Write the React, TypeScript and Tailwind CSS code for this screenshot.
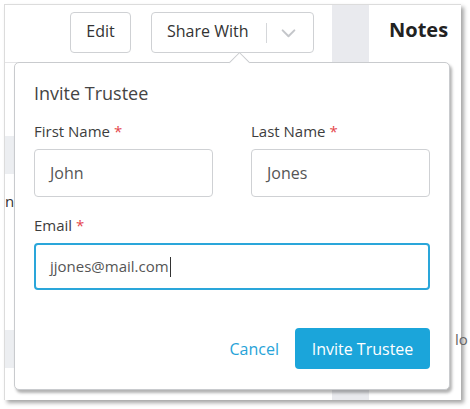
import { ReactNode } from 'react'

function Chevron() {
  return (
    <svg viewBox="0 0 16 10" fill="none" aria-hidden="true" className="h-[9px] w-[15px]">
      <path d="M1.5 1.5L8 8l6.5-6.5" stroke="#c4c6ca" strokeWidth="2.2" strokeLinecap="round" strokeLinejoin="round" />
    </svg>
  )
}

function Label({ children }: { children: ReactNode }) {
  return (
    <label className="mb-[8px] block text-[15px] leading-[20px] text-[#3d3d3d]">
      {children} <span className="text-[#e5464b]">*</span>
    </label>
  )
}

function Field({ value }: { value: string }) {
  return (
    <div className="flex h-[48px] items-center rounded-[4px] border border-[#cfd1d4] px-[15px] text-[16px] text-[#555]">
      {value}
    </div>
  )
}

export default function App() {
  return (
    <div className="h-[409px] w-[470px] bg-white font-['Open_Sans',sans-serif]">
      {/* framed screenshot */}
      <div className="relative ml-[4px] mt-[4px] h-[396px] w-[457px] border-l border-t border-[#dcdcdc] bg-white shadow-[3px_3px_4px_rgba(0,0,0,0.35)]">
        <div className="flex h-full">
          {/* left area */}
          <div className="flex w-[327px] shrink-0 flex-col">
            <div className="flex h-[58px] items-start gap-[20px] border-b border-[#e4e4e6] pl-[65px] pt-[7px]">
              <button className="h-[41px] w-[61px] rounded-[4px] border border-[#cfd1d4] pb-[3px] text-[16px] text-[#333]">Edit</button>
              <div className="flex h-[41px] w-[163px] items-center rounded-[4px] border border-[#cfd1d4] text-[16px] text-[#333]">
                <span className="pb-[3px] pl-[15px]">Share With</span>
                <span className="ml-[18px] h-[20px] w-px bg-[#d5d7da]" />
                <span className="ml-[14px] mt-[2px] flex"><Chevron /></span>
              </div>
            </div>
            <div className="mt-[73px] h-[38px] w-[10px] bg-[#eceef1]" />
            <div className="mt-[18px] text-[15px] leading-[18px] text-[#333]">n</div>
            <div className="mt-[120px] h-[38px] w-[10px] bg-[#eceef1]" />
          </div>
          {/* gray column */}
          <div className="w-[37px] shrink-0 bg-[#e9eaee]" />
          {/* notes column */}
          <div className="flex flex-1 flex-col pl-[20px] pt-[12px]">
            <div className="text-[20px] font-bold leading-[26px] text-[#222]">Notes</div>
            <div className="mt-[285px] pl-[66px] text-[15px] text-[#666]">lo</div>
          </div>
        </div>

        {/* popover */}
        <div className="absolute left-[9px] top-[57px] w-[436px] rounded-[5px] border border-[#c9cbce] bg-white px-[19px] pb-[20px] pt-[18px] shadow-[2px_3px_3px_rgba(0,0,0,0.3)]">
          <div className="absolute left-[217px] top-[-8px] h-[15px] w-[15px] rotate-45 border-l border-t border-[#c9cbce] bg-white" />
          <div className="text-[18px] leading-[24px] text-[#444]">Invite Trustee</div>
          <div className="mt-[16px] grid grid-cols-2 gap-x-[38px]">
            <div>
              <Label>First Name</Label>
              <Field value="John" />
            </div>
            <div>
              <Label>Last Name</Label>
              <Field value="Jones" />
            </div>
          </div>
          <div className="mt-[18px]">
            <Label>Email</Label>
            <div className="flex h-[47px] items-center rounded-[4px] border-2 border-[#2aa6da] px-[14px] text-[15px] text-[#555]">
              jjones@mail.com<span className="ml-px h-[20px] w-px bg-[#333]" />
            </div>
          </div>
          <div className="mt-[38px] flex items-center justify-end gap-[16px]">
            <button className="text-[16px] text-[#27a3d8]">Cancel</button>
            <button className="h-[41px] w-[135px] rounded-[4px] bg-[#1ba5da] text-[16px] text-white">Invite Trustee</button>
          </div>
        </div>
      </div>
    </div>
  )
}
